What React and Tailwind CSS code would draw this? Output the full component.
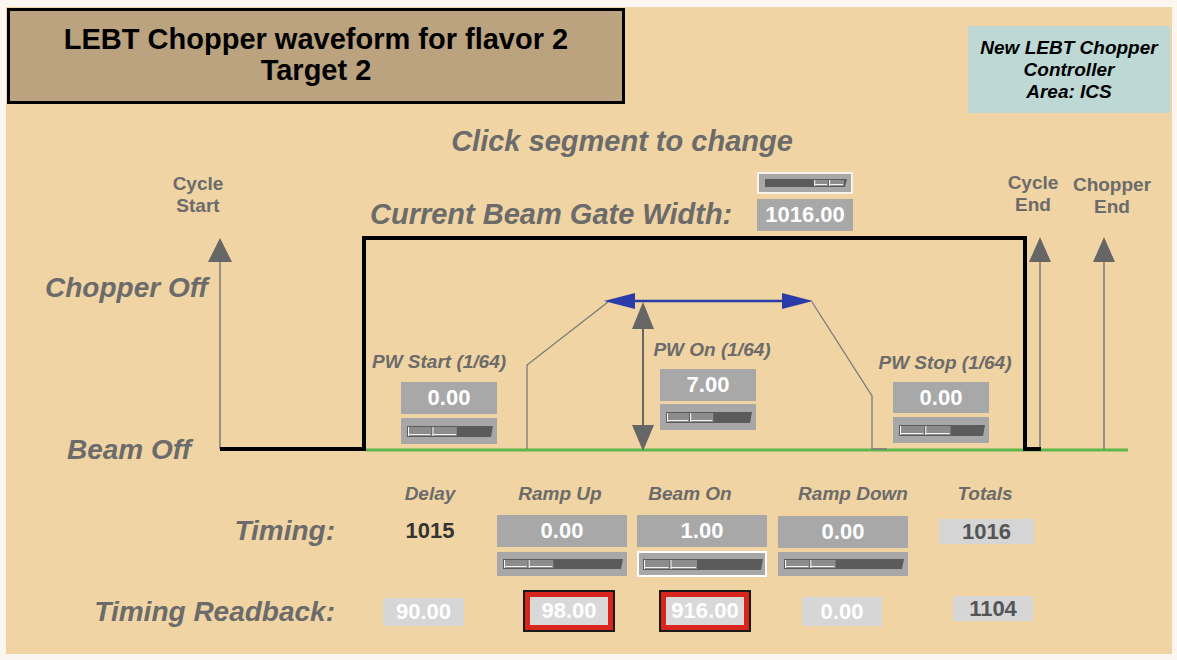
import React from "react";

function Slider({ w, h, light = 0.45, thumbRight = false, selected = false }) {
  const x0 = 6;
  const x1 = w - 4;
  const y0 = Math.round(h * 0.3);
  const y1 = Math.round(h * 0.72);
  const bw = x1 - x0;
  let s0, s1;
  if (thumbRight) {
    s0 = x0 + bw * 0.6;
    s1 = x1 - 3;
  } else {
    s0 = x0 + 1;
    s1 = x0 + bw * light;
  }
  const mid = (s0 + s1) / 2;
  const segs = [
    [s0, mid - 1],
    [mid, s1],
  ];
  return (
    <svg width={w} height={h} className="block">
      <rect x="0" y="0" width={w} height={h} fill="#a7a7a7" />
      {selected && (
        <rect x="1" y="1" width={w - 2} height={h - 2} fill="none" stroke="#ffffff" strokeWidth="2" />
      )}
      <polygon points={`${x0},${y0} ${x1},${y0} ${x1 - 2},${y1} ${x0},${y1}`} fill="#5b5b5b" />
      {segs.map(([a, b], i) => (
        <g key={i}>
          <rect x={a} y={y0 + 1} width={b - a} height={y1 - y0 - 2} fill="#8c8c8c" />
          <line x1={a + 0.5} y1={y0 + 1} x2={a + 0.5} y2={y1 - 1} stroke="#ffffff" strokeWidth="1" />
          <line x1={a} y1={y1 - 2.5} x2={b - 1} y2={y1 - 2.5} stroke="#f4f4f4" strokeWidth="1" />
        </g>
      ))}
    </svg>
  );
}

function Value({ w, h, children }) {
  return (
    <div
      style={{ width: w, height: h }}
      className="bg-[#a8a8a8] text-white font-bold text-[22px] flex items-center justify-center leading-none"
    >
      {children}
    </div>
  );
}

function Arrow({ x, tip, base, half }) {
  return (
    <g>
      <line x1={x} y1={449} x2={x} y2={base} stroke="#808080" strokeWidth="1.6" />
      <polygon points={`${x - half},${base} ${x + half},${base} ${x},${tip}`} fill="#666666" />
    </g>
  );
}

export default function App() {
  return (
    <div className="w-[1177px] h-[660px] bg-[#fbf7f0] pt-[7px] pl-[6px] font-['Liberation_Sans',Arial,sans-serif]">
      <div className="w-[1166px] h-[647px] bg-[#f1d4a3] flex flex-col">
        {/* Header */}
        <div className="h-[110px] shrink-0 flex justify-between items-start">
          <div className="mt-[1px] ml-[1px] w-[618px] h-[96px] border-[3px] border-black bg-[#baa37e] flex flex-col items-center justify-center pb-[2px] text-[29px] leading-[31px] font-bold text-black">
            <div>LEBT Chopper waveform for flavor 2</div>
            <div>Target 2</div>
          </div>
          <div className="mt-[19px] mr-[2px] w-[202px] h-[87px] bg-[#bed8d5] flex flex-col items-center justify-center text-[19px] leading-[22px] font-bold italic text-black">
            <div>New LEBT Chopper</div>
            <div>Controller</div>
            <div>Area: ICS</div>
          </div>
        </div>

        {/* Diagram canvas */}
        <div className="relative h-[353px] shrink-0">
          <svg
            className="absolute left-0 top-0"
            width="1166"
            height="353"
            viewBox="6 117 1166 353"
          >
            {/* green beam line */}
            <line x1="366" y1="450" x2="1128" y2="450" stroke="#5cb84a" strokeWidth="3" />
            {/* trapezoid */}
            <polyline
              points="527,449 527,365 608,302"
              fill="none"
              stroke="#7a7a7a"
              strokeWidth="1.3"
            />
            <polyline
              points="812,302 872,396 872,449 887,449"
              fill="none"
              stroke="#7a7a7a"
              strokeWidth="1.3"
            />
            {/* arrows */}
            <Arrow x={220} tip={238} base={262} half={12} />
            <Arrow x={1040} tip={237} base={262} half={11} />
            <Arrow x={1104} tip={237} base={262} half={11} />
            {/* waveform */}
            <polyline
              points="220,449 364,449 364,238 1025,238 1025,449 1041,449"
              fill="none"
              stroke="#000000"
              strokeWidth="4"
              strokeLinejoin="miter"
            />
            {/* blue double arrow */}
            <line x1="625" y1="301" x2="792" y2="301" stroke="#2b3ca8" strokeWidth="2.5" />
            <polygon points="604,301 635,293 635,309" fill="#2b3ca8" />
            <polygon points="813,301 782,293 782,309" fill="#2b3ca8" />
            {/* gray double vertical arrow */}
            <line x1="643" y1="325" x2="643" y2="428" stroke="#666666" strokeWidth="2" />
            <polygon points="632,329 654,329 643,302" fill="#666666" />
            <polygon points="632,425 654,425 643,451" fill="#666666" />
          </svg>

          <div className="absolute left-[416px] top-[8px] w-[400px] text-center text-[29px] leading-[32px] font-bold italic text-[#6b6b6b]">
            Click segment to change
          </div>

          <div className="absolute left-[142px] top-[56px] w-[100px] text-center text-[19px] leading-[22px] font-bold text-[#6b6b6b]">
            <div>Cycle</div>
            <div>Start</div>
          </div>

          <div className="absolute left-[977px] top-[55px] w-[100px] text-center text-[19px] leading-[22px] font-bold text-[#6b6b6b]">
            <div>Cycle</div>
            <div>End</div>
          </div>

          <div className="absolute left-[1056px] top-[57px] w-[100px] text-center text-[19px] leading-[22px] font-bold text-[#6b6b6b]">
            <div>Chopper</div>
            <div>End</div>
          </div>

          <div className="absolute left-[364px] top-[81px] text-[29px] leading-[32px] font-bold italic text-[#6b6b6b] whitespace-nowrap">
            Current Beam Gate Width:
          </div>

          <div className="absolute left-[751px] top-[55px] flex flex-col gap-[5px]">
            <div className="w-[96px] h-[22px] border-[2px] border-[#f7f3ea] overflow-hidden">
              <Slider w={92} h={18} thumbRight />
            </div>
            <Value w={96} h={32}>1016.00</Value>
          </div>

          <div className="absolute left-[39px] top-[155px] text-[28px] leading-[32px] font-bold italic text-[#6b6b6b] whitespace-nowrap">
            Chopper Off
          </div>
          <div className="absolute left-[61px] top-[317px] text-[28px] leading-[32px] font-bold italic text-[#6b6b6b] whitespace-nowrap">
            Beam Off
          </div>

          {/* PW Start */}
          <div className="absolute left-[343px] top-[234px] w-[180px] text-center text-[19px] leading-[22px] font-bold italic text-[#6b6b6b]">
            PW Start (1/64)
          </div>
          <div className="absolute left-[395px] top-[265px] flex flex-col gap-[4px]">
            <Value w={96} h={32}>0.00</Value>
            <Slider w={96} h={26} light={0.58} />
          </div>

          {/* PW On */}
          <div className="absolute left-[616px] top-[222px] w-[180px] text-center text-[19px] leading-[22px] font-bold italic text-[#6b6b6b]">
            PW On (1/64)
          </div>
          <div className="absolute left-[654px] top-[252px] flex flex-col gap-[3px]">
            <Value w={96} h={32}>7.00</Value>
            <Slider w={96} h={26} light={0.55} />
          </div>

          {/* PW Stop */}
          <div className="absolute left-[849px] top-[235px] w-[180px] text-center text-[19px] leading-[22px] font-bold italic text-[#6b6b6b]">
            PW Stop (1/64)
          </div>
          <div className="absolute left-[887px] top-[265px] flex flex-col gap-[4px]">
            <Value w={96} h={31}>0.00</Value>
            <Slider w={96} h={26} light={0.6} />
          </div>
        </div>

        {/* Bottom table */}
        <div className="flex flex-col">
          {/* headers */}
          <div className="mt-[12px] h-[24px] flex text-[19px] leading-[24px] font-bold italic text-[#6b6b6b]">
            <div className="ml-[364px] w-[120px] text-center">Delay</div>
            <div className="ml-[10px] w-[120px] text-center">Ramp Up</div>
            <div className="ml-[10px] w-[120px] text-center">Beam On</div>
            <div className="ml-[43px] w-[120px] text-center">Ramp Down</div>
            <div className="ml-[12px] w-[120px] text-center">Totals</div>
          </div>

          {/* Timing row */}
          <div className="mt-[9px] flex items-start">
            <div className="w-[329px] text-right text-[28px] leading-[32px] font-bold italic text-[#6b6b6b]">
              Timing:
            </div>
            <div className="ml-[35px] w-[120px] text-center text-[22px] leading-[32px] font-bold text-[#333333]">
              1015
            </div>
            <div className="ml-[7px] flex flex-col gap-[5px]">
              <Value w={130} h={32}>0.00</Value>
              <Slider w={130} h={24} light={0.42} />
            </div>
            <div className="ml-[10px] flex flex-col gap-[4px]">
              <Value w={130} h={32}>1.00</Value>
              <Slider w={130} h={26} light={0.45} selected />
            </div>
            <div className="ml-[11px] mt-[1px] flex flex-col gap-[4px]">
              <Value w={130} h={32}>0.00</Value>
              <Slider w={130} h={24} light={0.43} />
            </div>
            <div className="ml-[31px] mt-[4px] w-[95px] h-[25px] bg-[#d5d5d5] text-[#555555] font-bold text-[22px] flex items-center justify-center leading-none">
              1016
            </div>
          </div>

          {/* Readback row */}
          <div className="mt-[13px] flex items-start">
            <div className="w-[329px] mt-[6px] text-right text-[28px] leading-[32px] font-bold italic text-[#6b6b6b]">
              Timing Readback:
            </div>
            <div className="ml-[48px] mt-[8px] w-[81px] h-[28px] bg-[#d6d6d6] text-white font-bold text-[22px] flex items-center justify-center leading-none">
              90.00
            </div>
            <div className="ml-[59px] w-[92px] h-[42px] border-[2px] border-[#1a1a1a] bg-[#d8261d] p-[5px]">
              <div className="w-full h-full bg-[#d9d9d9] text-white font-bold text-[22px] flex items-center justify-center leading-none">
                98.00
              </div>
            </div>
            <div className="ml-[44px] w-[92px] h-[42px] border-[2px] border-[#1a1a1a] bg-[#d8261d] p-[5px]">
              <div className="w-full h-full bg-[#d9d9d9] text-white font-bold text-[22px] flex items-center justify-center leading-none">
                916.00
              </div>
            </div>
            <div className="ml-[51px] mt-[7px] w-[80px] h-[29px] bg-[#d6d6d6] text-white font-bold text-[22px] flex items-center justify-center leading-none">
              0.00
            </div>
            <div className="ml-[71px] mt-[6px] w-[80px] h-[25px] bg-[#d6d6d6] text-[#555555] font-bold text-[22px] flex items-center justify-center leading-none">
              1104
            </div>
          </div>
        </div>
      </div>
    </div>
  );
}
